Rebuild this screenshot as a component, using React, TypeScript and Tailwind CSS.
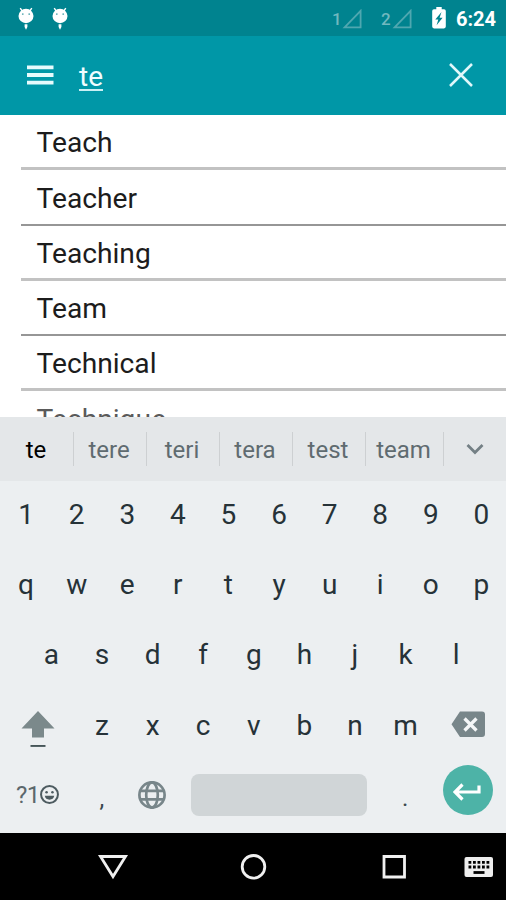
const WORDS = ["Teach", "Teacher", "Teaching", "Team", "Technical", "Technique"];

const SUGGESTIONS = [
  { word: "te", className: "w-[74px] pr-px text-black" },
  { word: "tere", className: "w-[73px]" },
  { word: "teri", className: "w-[73px]" },
  { word: "tera", className: "w-[73px]" },
  { word: "test", className: "w-[73px]" },
  { word: "team", className: "w-[78px]" },
];

function DebugIcon() {
  return (
    <svg width="18" height="24" viewBox="0 0 18 24" fill="white">
      <path d="M3.2 1.2 5.2 4M14.8 1.2 12.8 4" stroke="white" strokeWidth="1.4" />
      <ellipse cx="9" cy="9" rx="7.5" ry="7.2" />
      <circle cx="5.8" cy="7.1" r="0.9" fill="#5aa9b1" />
      <circle cx="12.2" cy="7.1" r="0.9" fill="#5aa9b1" />
      <path d="M7.6 17.2h2.8V20L9 22.8l-1.4-2.8z" />
    </svg>
  );
}

function SignalIcon() {
  return (
    <svg width="20" height="20" viewBox="0 0 20 20" fill="none">
      <path d="M2.6 18.3H18.6V1.8z" stroke="#4fa7b0" strokeWidth="1.8" />
    </svg>
  );
}

function BatteryIcon() {
  return (
    <svg width="14" height="22" viewBox="0 0 14 22">
      <path d="M4.3 0h5.4v2.2H12a1.8 1.8 0 0 1 1.8 1.8v15.6a1.8 1.8 0 0 1-1.8 1.8H2A1.8 1.8 0 0 1 .2 19.6V4A1.8 1.8 0 0 1 2 2.2h2.3z" fill="white" />
      <path d="M9.500 5 3.300 12.400h3L4.600 18.300l6-7.500h-3z" fill="#00838f" />
    </svg>
  );
}

function StatusBar() {
  return (
    <div className="flex h-9 items-center justify-between bg-[#00838f] pl-[17px] pr-[10px] text-white">
      <div className="flex gap-4 pt-px">
        <DebugIcon />
        <DebugIcon />
      </div>
      <div className="flex items-center pt-px">
        <span className="w-[10px] pt-px text-[17px] font-medium leading-none text-[#71b8bf]">1</span>
        <SignalIcon />
        <span className="ml-[19px] w-[11px] pt-px text-[17px] font-medium leading-none text-[#71b8bf]">2</span>
        <SignalIcon />
        <span className="ml-5 mr-[10px] -mt-px">
          <BatteryIcon />
        </span>
        <span className="pt-px text-[20px] font-bold leading-none">6:24</span>
      </div>
    </div>
  );
}

function AppBar() {
  return (
    <div className="flex h-[78.5px] items-center bg-[#0097a7] pl-[27px] pr-8">
      <svg width="27" height="20" viewBox="0 0 27 20" fill="#e6fbfd">
        <path d="M0 .5h26.5v3.8H0zM0 8.1h26.5v3.8H0zM0 15.7h26.5v3.8H0z" />
      </svg>
      <div className="ml-[25px] mt-1 flex flex-col">
        <span className="text-[28px] leading-[26px] text-[#f0fdff]">te</span>
        <span className="-mt-px h-[2px] bg-[#c9f0f4]" />
      </div>
      <svg className="ml-auto" width="26" height="26" viewBox="0 0 26 26" fill="none">
        <path d="M2 2 24 24M24 2 2 24" stroke="#e0f7fa" strokeWidth="2.5" />
      </svg>
    </div>
  );
}

function WordList() {
  return (
    <div className="h-[302.5px] overflow-hidden bg-white pl-[21px] pt-[0.7px]">
      {WORDS.map((word, i) => (
        <div
          key={word}
          className={`flex h-[55.2px] items-center pl-[15.5px] pt-1 text-[28.2px] leading-none ${
            i % 2 === 0 ? "border-b-[3px] border-[#c2c2c2]" : "border-b-2 border-[#969696]"
          } ${i === WORDS.length - 1 ? "text-[#5a5a5a]" : "text-[#1c1c1c]"}`}
        >
          {word}
        </div>
      ))}
    </div>
  );
}

function SuggestionStrip() {
  return (
    <div className="flex h-16 items-center bg-[#e4e7e9] text-[24px] text-[#5f6b70]">
      {SUGGESTIONS.map((s) => (
        <div
          key={s.word}
          className={`flex h-[34px] items-center justify-center border-r border-[#cdd0d2] pr-0.5 pt-0.5 ${s.className}`}
        >
          {s.word}
        </div>
      ))}
      <div className="flex h-[46px] flex-1 items-center justify-center">
        <svg width="18" height="12" viewBox="0 0 18 12" fill="none">
          <path d="M1.5 2 9 9.5 16.5 2" stroke="#748085" strokeWidth="2.8" />
        </svg>
      </div>
    </div>
  );
}

function KeyRow({ keys }: { keys: string }) {
  return (
    <div className="flex h-[70.4px] items-center justify-center pb-[3px] pl-[1.5px]">
      {keys.split("").map((k) => (
        <span key={k} className="w-[50.6px] shrink-0 text-center">
          {k}
        </span>
      ))}
    </div>
  );
}

function ShiftRow() {
  return (
    <div className="flex h-[70.4px] items-center pb-[3px]">
      <div className="flex w-[76.7px] justify-center pt-2">
        <svg width="34" height="38" viewBox="0 0 34 38" fill="#7b898b">
          <path d="M17 0 33.5 17.500H23V26.500H11V17.500H.5z" />
          <path d="M9.500 34h15v1.900h-15z" fill="#465558" />
        </svg>
      </div>
      {"zxcvbnm".split("").map((k) => (
        <span key={k} className="w-[50.6px] text-center">
          {k}
        </span>
      ))}
      <div className="flex flex-1 justify-center pb-0.5">
        <svg width="34" height="27" viewBox="0 0 34 27">
          <path d="M9 .5h22a3 3 0 0 1 3 3v19.5a3 3 0 0 1-3 3H9L.5 13.2z" fill="#78868a" />
          <path d="m13.5 7.5 12 12M25.5 7.5l-12 12" stroke="#f4f6f7" strokeWidth="3.3" />
        </svg>
      </div>
    </div>
  );
}

function BottomRow() {
  return (
    <div className="flex h-[70.4px] items-center">
      <div className="flex w-[76.7px] items-center pb-[7px] pl-4 text-[24px] text-[#5c686c]">
        <span className="w-[23.5px] whitespace-nowrap pt-px -tracking-[0.5px]">?1</span>
        <svg width="19" height="19" viewBox="0 0 18 18" fill="none">
          <circle cx="9" cy="9" r="8" stroke="#4d5b60" strokeWidth="1.9" />
          <circle cx="6.2" cy="6.8" r="1.2" fill="#4d5b60" />
          <circle cx="11.8" cy="6.8" r="1.2" fill="#4d5b60" />
          <path d="M4.5 10.3h9a4.6 4.6 0 0 1-9 0z" fill="#4d5b60" />
        </svg>
      </div>
      <span className="w-[50.6px] pt-0.5 text-center text-[24px] text-[#3a494e]">,</span>
      <div className="flex w-[50.6px] justify-center pb-1.5 pr-px">
        <svg width="28" height="28" viewBox="0 0 28 28" fill="none" stroke="#78868a" strokeWidth="2.7">
          <circle cx="14" cy="14" r="12.6" />
          <ellipse cx="14" cy="14" rx="5.8" ry="12.6" />
          <path d="M2.5 9.8h23M2.5 18.3h23" />
        </svg>
      </div>
      <div className="mb-[5px] ml-[13px] h-[42px] w-[176.5px] rounded-lg bg-[#d0d5d7]" />
      <span className="ml-[12.5px] w-[50.6px] pt-px text-center text-[24px] text-[#3a494e]">.</span>
      <div className="mb-[15px] ml-[13px] flex size-[50px] items-center justify-center rounded-full bg-[#4db3a7]">
        <svg className="mr-0.5 mt-1" width="28" height="18" viewBox="0 0 28 18" fill="none">
          <path d="M26 2.500v6.500H2.500M9.500 1.500 2 9l7.500 7.500" stroke="white" strokeWidth="3.2" />
        </svg>
      </div>
    </div>
  );
}

function NavBar() {
  return (
    <div className="h-[67px] bg-black">
      <svg width="506" height="67" viewBox="0 0 506 67" fill="none" stroke="#f0f0f0" strokeWidth="2.8">
        <path d="M100.5 23.5h25L113 43.5z" />
        <circle cx="253.5" cy="33.8" r="11.3" />
        <path d="M384 23.5h20.5V44H384z" />
        <rect x="464.5" y="24" width="28.5" height="20" rx="2" fill="#eee" stroke="none" />
        <path d="M468.5 29.3h21M468.5 34h21" stroke="black" strokeWidth="2.8" strokeDasharray="2.8 1.7" />
        <path d="M473.5 39.5h11" stroke="black" strokeWidth="2.8" />
      </svg>
    </div>
  );
}

export default function App() {
  return (
    <div className="h-[900px] w-[506px] overflow-hidden font-['Roboto',sans-serif]">
      <StatusBar />
      <AppBar />
      <WordList />
      <SuggestionStrip />
      <div className="h-[352px] bg-[#eceff1] text-[28px] leading-none text-[#263238]">
        <KeyRow keys="1234567890" />
        <KeyRow keys="qwertyuiop" />
        <KeyRow keys="asdfghjkl" />
        <ShiftRow />
        <BottomRow />
      </div>
      <NavBar />
    </div>
  );
}
